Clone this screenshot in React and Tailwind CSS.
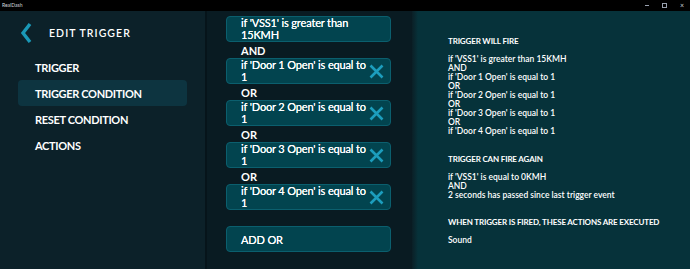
import React from 'react';

const conditions = [
  { join: null, text: ["if 'VSS1' is greater than", '15KMH'], removable: false },
  { join: 'AND', text: ["if 'Door 1 Open' is equal to", '1'], removable: true },
  { join: 'OR', text: ["if 'Door 2 Open' is equal to", '1'], removable: true },
  { join: 'OR', text: ["if 'Door 3 Open' is equal to", '1'], removable: true },
  { join: 'OR', text: ["if 'Door 4 Open' is equal to", '1'], removable: true },
];

const menu = ['TRIGGER', 'TRIGGER CONDITION', 'RESET CONDITION', 'ACTIONS'];

function CloseIcon() {
  return (
    <svg width="15" height="15" viewBox="0 0 15 15" className="shrink-0">
      <path d="M1.5 1.5 L13.5 13.5 M13.5 1.5 L1.5 13.5" stroke="#1c9dbd" strokeWidth="2.6" strokeLinecap="butt" />
    </svg>
  );
}

export default function App() {
  return (
    <div className="w-[690px] h-[269px] overflow-hidden flex flex-col bg-black text-white" style={{ fontFamily: 'Lato, "Open Sans", sans-serif' }}>
      {/* Title bar */}
      <div className="h-[11px] bg-black flex items-center justify-between pl-[2px] pr-[6px] shrink-0">
        <span className="text-[5px] leading-none text-gray-300">RealDash</span>
        <div className="flex items-center gap-[13px] text-gray-300 text-[6px] leading-none">
          <span className="block w-[4px] h-[1px] bg-gray-400"></span>
          <span className="block w-[5px] h-[5px] border border-gray-400"></span>
          <span className="text-[7px]">×</span>
        </div>
      </div>

      <div className="flex flex-1">
        {/* Left menu */}
        <div className="w-[205px] bg-[#0c2129] pt-[11px] shrink-0">
          <div className="flex items-center h-[22px] pl-[20px]">
            <svg width="12" height="22" viewBox="0 0 12 22">
              <path d="M10 2 L3 11 L10 20" stroke="#1a98b6" strokeWidth="3.4" fill="none" />
            </svg>
            <span className="ml-[17px] text-[10.5px] tracking-[0.1em] font-semibold leading-none">EDIT TRIGGER</span>
          </div>
          <div className="mt-[10px] flex flex-col">
            {menu.map((m) => (
              <div
                key={m}
                className={`mx-[18px] h-[26px] flex items-center pl-[17px] rounded-[4px] text-[11px] font-bold tracking-[-0.03em] leading-none whitespace-nowrap ${m === 'TRIGGER CONDITION' ? 'bg-[#0d3440]' : ''}`}
              >
                {m}
              </div>
            ))}
          </div>
        </div>

        {/* Conditions list */}
        <div className="w-[207px] shrink-0 bg-[#091b22] border-l-[2px] border-[#06141a] pt-[5px] pl-[19px]">
          {conditions.map((c, i) => (
            <div key={i}>
              {c.join && (
                <div className="h-[16px] pl-[15px] flex items-center text-[11px] font-bold leading-none">{c.join}</div>
              )}
              <div className="w-[165px] h-[26px] rounded-[4px] bg-[#02444f] border border-[#0b5f6e] flex items-center justify-between pl-[14px] pr-[6px]">
                <div className="text-[11px] font-normal leading-[12px] tracking-[-0.15px] whitespace-nowrap [text-shadow:0_0_0.4px_white]">
                  <div>{c.text[0]}</div>
                  <div>{c.text[1]}</div>
                </div>
                {c.removable && <CloseIcon />}
              </div>
            </div>
          ))}
          <div className="mt-[16px] w-[165px] h-[26px] rounded-[4px] bg-[#02444f] border border-[#0b5f6e] flex items-center pl-[14px] text-[11px] font-normal tracking-[-0.15px] leading-none [text-shadow:0_0_0.4px_white]">
            ADD OR
          </div>
        </div>

        {/* Summary */}
        <div className="flex-1 bg-[#06323a] bg-gradient-to-r from-[#0a1f26] via-[#06323a] to-[#06323a] bg-[length:12px_100%] bg-no-repeat pl-[36px] pt-[26px] text-[8.5px] leading-[9px] font-semibold whitespace-nowrap">
          <div className="font-bold text-[8px] tracking-[-0.15px]">TRIGGER WILL FIRE</div>
          <div className="mt-[9px]">
            <div>if 'VSS1' is greater than 15KMH</div>
            <div>AND</div>
            <div>if 'Door 1 Open' is equal to 1</div>
            <div>OR</div>
            <div>if 'Door 2 Open' is equal to 1</div>
            <div>OR</div>
            <div>if 'Door 3 Open' is equal to 1</div>
            <div>OR</div>
            <div>if 'Door 4 Open' is equal to 1</div>
          </div>
          <div className="mt-[19px] font-bold text-[8px] tracking-[-0.15px]">TRIGGER CAN FIRE AGAIN</div>
          <div className="mt-[9px]">
            <div>if 'VSS1' is equal to 0KMH</div>
            <div>AND</div>
            <div>2 seconds has passed since last trigger event</div>
          </div>
          <div className="mt-[18px] font-bold text-[8px] tracking-[-0.15px]">WHEN TRIGGER IS FIRED, THESE ACTIONS ARE EXECUTED</div>
          <div className="mt-[9px]">Sound</div>
        </div>
      </div>
    </div>
  );
}
